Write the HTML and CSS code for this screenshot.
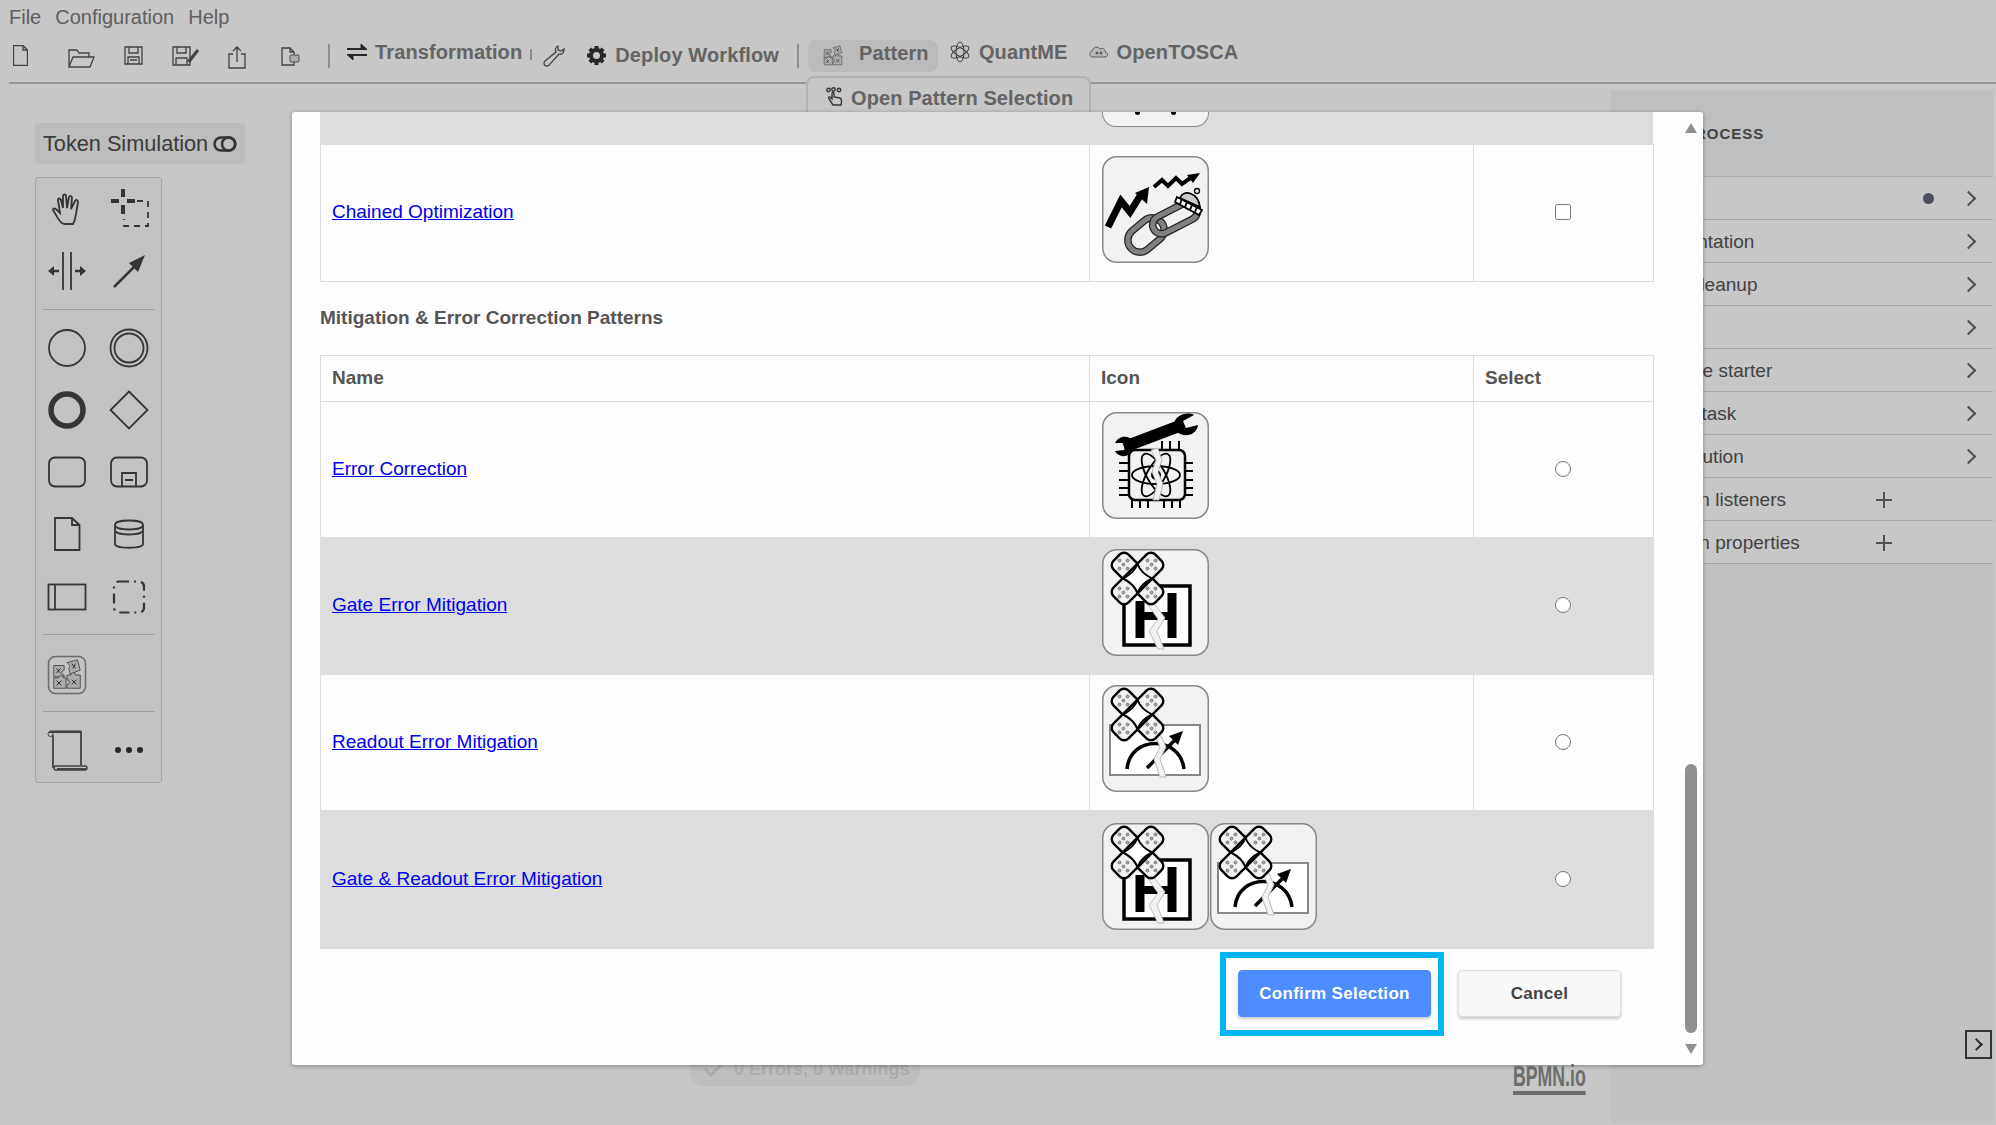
FILE: index.html
```html
<!DOCTYPE html>
<html lang="en">
<head>
    <meta charset="UTF-8">
    <title>Quantum Workflow Modeler</title>
    <link rel="stylesheet" href="styles.css">
</head>
<body>

<!-- shared drawings -->
<svg class="defs" aria-hidden="true">
    <symbol id="bandage" viewBox="0 0 107 107">
        <g stroke="#000" stroke-width="2.4" fill="#f2f2f2">
            <rect x="6" y="19" width="59" height="21" rx="6" transform="rotate(45 35.500 29.500)"/>
            <rect x="6" y="19" width="59" height="21" rx="6" transform="rotate(-45 35.500 29.500)"/>
        </g>
        <path d="M35.500 15Q39 24 50 29.500Q39 35 35.500 44Q32 35 21 29.500Q32 24 35.500 15Z" fill="#fff" stroke="#000" stroke-width="2"/>
        <g id="pad-dots" fill="#aaa" stroke="#666" stroke-width=".8">
            <circle cx="21.500" cy="15.500" r="1.500"/><circle cx="17.500" cy="11.500" r="1.500"/><circle cx="25.500" cy="11.500" r="1.500"/>
            <circle cx="17.500" cy="19.500" r="1.500"/><circle cx="25.500" cy="19.500" r="1.500"/>
        </g>
        <use href="#pad-dots" x="28"/>
        <use href="#pad-dots" y="28"/>
        <use href="#pad-dots" x="28" y="28"/>
    </symbol>
    <symbol id="gate-box" viewBox="0 0 107 107">
        <rect x="22" y="37" width="66" height="59" fill="#fff" stroke="#000" stroke-width="3.500"/>
        <path d="M38 52V89M70 44V89" stroke="#000" stroke-width="9"/>
        <path d="M40 67H68" stroke="#000" stroke-width="8"/>
        <path d="M46 56L56 70L47 82L56 100H62L55 82L63 69L52 54Z" fill="#f2f2f2" stroke="#bbb" stroke-width="1"/>
    </symbol>
    <symbol id="readout-box" viewBox="0 0 107 107">
        <rect x="8" y="40" width="90" height="50" fill="#fff" stroke="#888" stroke-width="2"/>
        <path d="M25 84C28 50 78 50 82 84" fill="none" stroke="#000" stroke-width="3.500"/>
        <path d="M45 83L76 52" stroke="#000" stroke-width="3.500"/>
        <path d="M81 46L67 51L76 60Z" fill="#000"/>
        <path d="M52 48L58 62L52 74L58 92H64L58 74L64 62L57 46Z" fill="#f2f2f2" stroke="#bbb" stroke-width="1"/>
    </symbol>
    <symbol id="puzzle" viewBox="0 0 38 38">
        <g fill="#ddd" stroke="#444" stroke-width=".8">
            <path d="M5 9H16V14a2.500 2.500 0 0 0 0 5V21H5Z"/>
            <path d="M19 6L30 3L33 14L27 16a2.500 2.500 0 0 1-5 1L21 12a2.500 2.500 0 0 0 0-4Z"/>
            <path d="M5 22H10a2.500 2.500 0 0 1 5 0H18V33H5Z"/>
            <path d="M19 22V19H23a2.500 2.500 0 0 1 5 0H33V33H19V29a2.500 2.500 0 0 0 0-5Z"/>
        </g>
        <path d="M8 12L12 17M12 12L8 17M24 7L28 12M28 7L25 12M8 25L13 30M13 25L8 30M24 24L29 29M29 24L24 29" stroke="#333" stroke-width="1"/>
    </symbol>
</svg>

<div class="app">
    <nav class="menubar">
        <span>File</span>
        <span>Configuration</span>
        <span>Help</span>
    </nav>

    <div class="toolbar">
        <div class="file-tools">
            <svg class="tool-new" width="15" height="21" viewBox="0 0 15 21"><path d="M.5.500H10L14.500 5V20.500H.5ZM10 .5V5H14.500" class="line"/></svg>
            <svg class="tool-open" width="27" height="19" viewBox="0 0 27 19"><path d="M1 18V1H9L11 4H21V8M1 18L5 8H26L22 18Z" class="line"/></svg>
            <svg class="tool-save" width="19" height="19" viewBox="0 0 19 19"><path d="M1 1H18V18H1ZM5 1V7H14V1M4 18V11H15V18M6 14H13" class="line"/></svg>
            <svg class="tool-save" width="27" height="20" viewBox="0 0 27 20"><path d="M1 1H18V19H1ZM5 1V7H14V1M4 19V12H15V19" class="line"/><path d="M15 15L25 3L27 5L18 17Z" fill="#555"/></svg>
            <svg class="tool-save" width="18" height="23" viewBox="0 0 18 23"><path d="M5 8H1V22H17V8H13M9 16V1M5 5L9 1L13 5" class="line"/></svg>
            <svg class="tool-export" width="19" height="19" viewBox="0 0 19 19"><path d="M1 1H9L13 5V18H1ZM9 1V5H13" class="line"/><rect x="9" y="8" width="9" height="7" rx="1" fill="#ddd" stroke="#666"/></svg>
        </div>
        <span class="tool-sep"></span>
        <div class="tool-btn raised tool-transform">
            <svg width="20" height="20" viewBox="0 0 20 20"><path d="M0 6.500H14V2L20 7.500H0ZM20 13.500H6V18L0 12.500H20Z" fill="#333" stroke="#333"/></svg>
            <span>Transformation</span>
        </div>
        <span class="tool-sep small"></span>
        <svg class="tool-wrench" width="23" height="22" viewBox="0 0 23 22"><path d="M16 1C13 2 13 5 14 7L3 16C1 18 2 21 5 21C7 21 8 19 8 19L17 9C20 10 22 8 22 4L19 6L16 5Z" class="line"/></svg>
        <div class="tool-btn tool-deploy">
            <svg width="21" height="21" viewBox="0 0 21 21"><circle cx="10.500" cy="10.500" r="5.500" fill="none" stroke="#333" stroke-width="4"/><path d="M10.500 1V4M10.500 17V20M1 10.500H4M17 10.500H20M3.800 3.800L6 6M15 15L17.200 17.200M3.800 17.200L6 15M15 6L17.200 3.800" stroke="#333" stroke-width="4"/></svg>
            <span>Deploy Workflow</span>
        </div>
        <span class="tool-sep deploy-sep"></span>
        <div class="tool-btn raised tool-pattern active">
            <svg width="24" height="24"><use href="#puzzle"/></svg>
            <span>Pattern</span>
        </div>
        <div class="tool-btn raised tool-quant">
            <svg width="20" height="22" viewBox="0 0 20 22" fill="none" stroke="#555"><ellipse cx="10" cy="11" rx="4" ry="10"/><ellipse cx="10" cy="11" rx="4" ry="10" transform="rotate(60 10 11)"/><ellipse cx="10" cy="11" rx="4" ry="10" transform="rotate(-60 10 11)"/></svg>
            <span>QuantME</span>
        </div>
        <div class="tool-btn raised tool-tosca">
            <svg width="20" height="12" viewBox="0 0 20 12"><path d="M4 11C0 11 0 6 3 5C4 1 9 0 11 3C15 1 17 5 16 6C20 7 19 11 16 11Z" fill="#eee" stroke="#777"/><circle cx="8" cy="7" r="1.500" fill="#777"/><circle cx="12" cy="7" r="1.500" fill="#777"/></svg>
            <span>OpenTOSCA</span>
        </div>
    </div>

    <div class="pattern-menu">
        <svg width="18" height="19" viewBox="0 0 18 19" fill="none" stroke="#444" stroke-width="1.400"><path d="M7 18L3 12C2 10 4 9 5 11L6 12V7C6 5 8 5 8 7V10L14 11C16 12 16 14 15 18Z"/><circle cx="2.500" cy="3" r="1.700"/><circle cx="7.500" cy="2.500" r="1.700"/><circle cx="13" cy="3" r="1.700"/></svg>
        <span>Open Pattern Selection</span>
    </div>

    <main class="workspace">
        <aside class="left-col">
            <div class="token-sim">
                <span>Token Simulation</span>
                <svg width="24" height="16" viewBox="0 0 24 16" fill="none" stroke="#444" stroke-width="2.500"><rect x="1.500" y="1.500" width="21" height="13" rx="6.500"/><circle cx="15.500" cy="8" r="6.500"/></svg>
            </div>

            <div class="palette">
                <div class="palette-group first">
                    <svg class="pi" viewBox="0 0 44 44"><path d="M19 38C15 37 14 34 11 29L8 24C8 22 10 22 12 24L15 27L13 14C13 12 15 12 16 14L18 22L18 10C18 8 21 8 21 10L22 22L24 11C25 9 27 10 27 12L26 23L30 15C31 13 33 14 33 16L31 28C30 32 30 35 28 38Z" class="ic"/></svg>
                    <svg class="pi" viewBox="0 0 44 44"><path d="M16 3V11M16 19V28M4 15H12M20 15H28" stroke="#444" stroke-width="4" fill="none"/><path d="M30 15H41V40H17V33" class="ic dashed"/></svg>
                    <svg class="pi" viewBox="0 0 44 44"><path d="M18 3V41M26 3V41" class="ic"/><path d="M3 22L9 17V27ZM41 22L35 17V27Z" fill="#444"/><path d="M8 22H14M30 22H36" stroke="#444" stroke-width="2.500"/></svg>
                    <svg class="pi" viewBox="0 0 44 44"><path d="M7 38L30 15" stroke="#444" stroke-width="2.500"/><path d="M38 6L22 14L31 23Z" fill="#444"/></svg>
                </div>
                <hr class="palette-sep">
                <div class="palette-group">
                    <svg class="pi" viewBox="0 0 44 44"><circle cx="22" cy="22" r="18" class="ic"/></svg>
                    <svg class="pi" viewBox="0 0 44 44"><circle cx="22" cy="22" r="18.500" class="ic"/><circle cx="22" cy="22" r="14.500" class="ic"/></svg>
                    <svg class="pi" viewBox="0 0 44 44"><circle cx="22" cy="22" r="16" fill="none" stroke="#444" stroke-width="5.500"/></svg>
                    <svg class="pi" viewBox="0 0 44 44"><path d="M22 3.500L40.500 22L22 40.500L3.500 22Z" class="ic"/></svg>
                    <svg class="pi" viewBox="0 0 44 44"><rect x="4" y="7.500" width="36" height="29" rx="6" class="ic"/></svg>
                    <svg class="pi" viewBox="0 0 44 44"><rect x="4" y="7.500" width="36" height="29" rx="6" class="ic"/><path d="M15 36V23H29V36M18 30H26" class="ic"/></svg>
                    <svg class="pi" viewBox="0 0 44 44"><path d="M10 6H27L34.500 13V38H10ZM27 6V13H34.500" class="ic"/></svg>
                    <svg class="pi" viewBox="0 0 44 44"><path d="M8 13V32C8 37 36 37 36 32V13C36 7 8 7 8 13C8 19 36 19 36 13M8 18C8 24 36 24 36 18" class="ic"/></svg>
                    <svg class="pi" viewBox="0 0 44 44"><rect x="3.500" y="10.500" width="37" height="25" class="ic"/><path d="M10 10.500V35.500" class="ic"/></svg>
                    <svg class="pi" viewBox="0 0 44 44"><rect x="7" y="7.500" width="30" height="31" rx="5" class="ic dashdot"/></svg>
                </div>
                <hr class="palette-sep">
                <div class="palette-group">
                    <svg class="pi pi-pattern" viewBox="0 0 44 44"><rect x="3.500" y="3.500" width="37" height="37" rx="7" fill="none" stroke="#888" stroke-width="1.500"/><use href="#puzzle" x="4" y="4" width="36" height="36"/></svg>
                </div>
                <hr class="palette-sep">
                <div class="palette-group">
                    <svg class="pi pi-script" viewBox="0 0 44 44"><path d="M4 3H36V36M8 6V39M12 40H41" fill="none" stroke="#555" stroke-width="1.800"/><path d="M5 2H36" stroke="#555"/><circle cx="5.500" cy="5" r="2.500" fill="none" stroke="#555"/><rect x="9" y="37" width="33" height="4" rx="2" fill="none" stroke="#555" stroke-width="1.500"/></svg>
                    <div class="dots"><i></i><i></i><i></i></div>
                </div>
            </div>
        </aside>

        <div class="canvas">
            <div class="status-pill">
                <svg width="20" height="14" viewBox="0 0 20 14" fill="none" stroke="#ddd" stroke-width="3.500"><path d="M2 6L8 12L18 2"/></svg>
                <span>0 Errors, 0 Warnings</span>
            </div>
            <div class="bpmn-logo">BPMN.io</div>
        </div>

        <aside class="props">
            <div class="props-head"><span>PROCESS</span></div>
            <div class="props-row"><span class="lbl">General</span><i class="dot"></i><span class="chev"></span></div>
            <div class="props-row"><span class="lbl">Documentation</span><span class="chev"></span></div>
            <div class="props-row"><span class="lbl">History cleanup</span><span class="chev"></span></div>
            <div class="props-row"><span class="lbl">Tasklist</span><span class="chev"></span></div>
            <div class="props-row"><span class="lbl">Candidate starter</span><span class="chev"></span></div>
            <div class="props-row"><span class="lbl">External task</span><span class="chev"></span></div>
            <div class="props-row"><span class="lbl">Job execution</span><span class="chev"></span></div>
            <div class="props-row"><span class="lbl">Execution listeners</span><span class="plus"></span></div>
            <div class="props-row"><span class="lbl">Extension properties</span><span class="plus"></span></div>
            <div class="props-toggle"><span class="chev"></span></div>
        </aside>
    </main>
</div>

<div class="overlay"></div>

<div class="modal">
    <div class="tail-row">
        <div class="tail-tile"><i></i><i></i></div>
    </div>

    <table class="pattern-table">
        <tr>
            <td class="col-name"><a href="#">Chained Optimization</a></td>
            <td class="col-icon">
                <div class="tiles">
                    <svg class="tile" viewBox="0 0 107 107">
                        <rect x=".75" y=".75" width="105.500" height="105.500" rx="14" class="tile-bg"/>
                        <path d="M6 71L19 45L28 56L38 40" fill="none" stroke="#000" stroke-width="7"/>
                        <path d="M47 31L33 37L45 48Z" fill="#000"/>
                        <path d="M52 31L60 24L66 30L74 22L80 28L90 21" fill="none" stroke="#000" stroke-width="4"/>
                        <path d="M98 17L85 19L91 27Z" fill="#000"/>
                        <g fill="none">
                            <rect x="24" y="67" width="40" height="24" rx="12" stroke="#222" stroke-width="7.500" transform="rotate(-40 44 79)"/>
                            <rect x="24" y="67" width="40" height="24" rx="12" stroke="#808080" stroke-width="5" transform="rotate(-40 44 79)"/>
                            <rect x="49" y="53" width="48" height="18" rx="9" stroke="#222" stroke-width="7.500" transform="rotate(-27 73 62)"/>
                            <rect x="49" y="53" width="48" height="18" rx="9" stroke="#808080" stroke-width="5" transform="rotate(-27 73 62)"/>
                        </g>
                        <path d="M78 42C81 33 96 36 98 51Z" fill="#ccc" stroke="#000" stroke-width="1.800"/>
                        <path d="M75 41L100 54L97 59L73 46Z" fill="#fff" stroke="#000" stroke-width="1.800"/>
                        <path d="M80 43L78 48M85 46L83 51M90 49L88 54M95 51L93 56" stroke="#000" stroke-width="2"/>
                        <circle cx="95" cy="35" r="2.500" fill="#fff" stroke="#000" stroke-width="1.300"/>
                    </svg>
                </div>
            </td>
            <td class="col-select"><input type="checkbox"></td>
        </tr>
    </table>

    <h3 class="section-title">Mitigation &amp; Error Correction Patterns</h3>

    <table class="pattern-table">
        <tr class="head-row">
            <th class="col-name">Name</th>
            <th class="col-icon">Icon</th>
            <th class="col-select">Select</th>
        </tr>
        <tr>
            <td class="col-name"><a href="#">Error Correction</a></td>
            <td class="col-icon">
                <div class="tiles">
                    <svg class="tile" viewBox="0 0 107 107">
                        <rect x=".75" y=".75" width="105.500" height="105.500" rx="14" class="tile-bg"/>
                        <rect x="27" y="38" width="56" height="50" rx="6" fill="none" stroke="#000" stroke-width="2.500"/>
                        <path d="M17 51H27M17 59H27M17 68H27M17 76H27M17 83H27M83 51H91M83 59H91M83 68H91M83 76H91M83 83H91M30 88V96M38 88V96M46 88V96M62 88V96M70 88V96M78 88V96M60 29V38M68 29V38M77 29V38" stroke="#000" stroke-width="2"/>
                        <g fill="none" stroke="#000" stroke-width="1.800">
                            <ellipse cx="54" cy="63" rx="24" ry="9"/>
                            <ellipse cx="54" cy="63" rx="24" ry="9" transform="rotate(60 54 63)"/>
                            <ellipse cx="54" cy="63" rx="24" ry="9" transform="rotate(-60 54 63)"/>
                        </g>
                        <circle cx="54" cy="63" r="5" fill="#000"/>
                        <path d="M49 38L54 48L50 60L55 72L51 88H57L61 72L56 60L60 48L56 36Z" fill="#f2f2f2" stroke="#aaa" stroke-width=".8"/>
                        <path d="M22 35L80 13" stroke="#000" stroke-width="12"/>
                        <path d="M72 11C75 1 88 0 92 3L81 9L84 16L96 13C95 22 84 27 75 20Z" fill="#000"/>
                        <path d="M30 38C28 46 16 46 13 39L22 38L25 31L13 31C16 24 26 22 31 29Z" fill="#000"/>
                    </svg>
                </div>
            </td>
            <td class="col-select"><input type="radio" name="mitigation"></td>
        </tr>
        <tr>
            <td class="col-name"><a href="#">Gate Error Mitigation</a></td>
            <td class="col-icon">
                <div class="tiles">
                    <svg class="tile" viewBox="0 0 107 107">
                        <rect x=".75" y=".75" width="105.500" height="105.500" rx="14" class="tile-bg"/>
                        <use href="#gate-box" width="107" height="107"/>
                        <use href="#bandage" width="107" height="107"/>
                    </svg>
                </div>
            </td>
            <td class="col-select"><input type="radio" name="mitigation"></td>
        </tr>
        <tr>
            <td class="col-name"><a href="#">Readout Error Mitigation</a></td>
            <td class="col-icon">
                <div class="tiles">
                    <svg class="tile" viewBox="0 0 107 107">
                        <rect x=".75" y=".75" width="105.500" height="105.500" rx="14" class="tile-bg"/>
                        <use href="#readout-box" width="107" height="107"/>
                        <use href="#bandage" width="107" height="107"/>
                    </svg>
                </div>
            </td>
            <td class="col-select"><input type="radio" name="mitigation"></td>
        </tr>
        <tr class="last-row">
            <td class="col-name"><a href="#">Gate &amp; Readout Error Mitigation</a></td>
            <td class="col-icon">
                <div class="tiles">
                    <svg class="tile" viewBox="0 0 107 107">
                        <rect x=".75" y=".75" width="105.500" height="105.500" rx="14" class="tile-bg"/>
                        <use href="#gate-box" width="107" height="107"/>
                        <use href="#bandage" width="107" height="107"/>
                    </svg>
                    <svg class="tile" viewBox="0 0 107 107">
                        <rect x=".75" y=".75" width="105.500" height="105.500" rx="14" class="tile-bg"/>
                        <use href="#readout-box" width="107" height="107"/>
                        <use href="#bandage" width="107" height="107"/>
                    </svg>
                </div>
            </td>
            <td class="col-select"><input type="radio" name="mitigation"></td>
        </tr>
    </table>

    <div class="modal-footer">
        <div class="highlight"><button class="btn btn-primary" type="button">Confirm Selection</button></div>
        <button class="btn btn-cancel" type="button">Cancel</button>
    </div>

    <div class="scrollbar">
        <span class="arrow-up"></span>
        <span class="thumb"></span>
        <span class="arrow-down"></span>
    </div>
</div>

</body>
</html>
```
FILE: styles.css
```css
* {
    box-sizing: border-box;
}

html, body {
    margin: 0;
    height: 1125px;
    overflow: hidden;
}

body {
    position: relative;
    font-family: "Liberation Sans", Arial, sans-serif;
    background: #fff;
    color: #444;
}

.defs {
    position: absolute;
    width: 0;
    height: 0;
}

.line {
    fill: none;
    stroke: #555;
    stroke-width: 1.3;
}

.app {
    display: flex;
    flex-direction: column;
    height: 1125px;
}

/* menu and toolbar */
.menubar {
    display: flex;
    gap: 14px;
    height: 32px;
    padding: 6px 0 0 9px;
    font-size: 20px;
    line-height: 23px;
    color: #7a7a7a;
}

.toolbar {
    display: flex;
    align-items: flex-start;
    height: 52px;
    margin-left: 9px;
    border-bottom: 2px solid #c4c4c4;
    font-size: 20px;
    font-weight: bold;
    letter-spacing: .12px;
    color: #808080;
}

.file-tools {
    display: flex;
    align-items: flex-start;
    gap: 29px;
    padding: 13px 0 0 4px;
}

.tool-open { margin-top: 4px; margin-left: 11px; }
.tool-save { margin-top: 1px; }
.tool-export { margin-top: 2px; margin-left: 6px; }

.tool-sep {
    width: 2px;
    height: 24px;
    margin: 12px 0 0 28px;
    background: #b5b5b5;
}

.tool-sep.small {
    height: 11px;
    margin: 17px 0 0 8px;
}

.tool-sep.deploy-sep {
    margin: 12px 0 0 18px;
}

.tool-btn {
    display: flex;
    align-items: center;
    padding-top: 10px;
    line-height: 26px;
}

.tool-btn.raised {
    padding-top: 7px;
}

.tool-transform { margin-left: 17px; gap: 8px; }
.tool-wrench { margin: 13px 0 0 10px; }
.tool-deploy { margin-left: 21px; gap: 8px; }

.tool-pattern {
    width: 130px;
    height: 32px;
    margin: 8px 0 0 9px;
    padding: 0 0 0 13px !important;
    gap: 14px;
    border-radius: 8px;
}

.tool-pattern span {
    margin-top: -6px;
}

.tool-pattern.active {
    background: #f0f0f0;
}

.tool-quant { margin-left: 12px; gap: 9px; }
.tool-tosca { margin-left: 21px; gap: 8px; }

.pattern-menu {
    position: absolute;
    left: 806px;
    top: 76px;
    width: 285px;
    height: 42px;
    display: flex;
    align-items: flex-start;
    gap: 7px;
    padding: 9px 0 0 18px;
    border: 2px solid #e4e4e4;
    border-radius: 8px 8px 0 0;
    background: #fff;
    font-size: 20px;
    font-weight: bold;
    line-height: 22px;
    letter-spacing: .1px;
    color: #808080;
}

/* main area */
.workspace {
    display: flex;
    flex: 1;
    min-height: 0;
}

.left-col {
    width: 245px;
    padding: 39px 0 0 35px;
}

.token-sim {
    display: flex;
    align-items: center;
    gap: 5px;
    width: 210px;
    height: 41px;
    padding-left: 8px;
    border-radius: 3px;
    background: #f2f2f2;
    font-size: 21.700px;
    color: #4c4c4c;
}

.palette {
    width: 127px;
    margin-top: 13px;
    padding-bottom: 1px;
    border: 1px solid #d2d2d2;
    border-radius: 3px;
    background: #fafafa;
}

.palette-group {
    display: grid;
    grid-template-columns: 62px 62px;
    grid-auto-rows: 62px;
    justify-items: center;
    align-items: center;
}

.palette-group.first {
    grid-auto-rows: 63px;
    margin-top: -2px;
}

.palette-sep {
    width: 112px;
    height: 1px;
    margin: 7px 0 7px 7px;
    border: 0;
    background: #ccc;
}

.pi {
    width: 44px;
    height: 44px;
}

.pi-pattern {
    margin-top: 3px;
}

.pi-script {
    margin-top: 1px;
}

.ic {
    fill: none;
    stroke: #444;
    stroke-width: 1.800;
}

.ic.dashed {
    stroke-dasharray: 6 5;
}

.ic.dashdot {
    stroke-width: 2.200;
    stroke-dasharray: 10 5 2 5;
}

.dots {
    display: flex;
    gap: 5px;
}

.dots i {
    width: 6px;
    height: 6px;
    border-radius: 50%;
    background: #333;
}

.canvas {
    position: relative;
    flex: 1;
}

.status-pill {
    position: absolute;
    left: 445px;
    top: 950px;
    display: flex;
    align-items: flex-end;
    gap: 11px;
    width: 230px;
    height: 52px;
    padding: 0 0 6px 13px;
    border-radius: 0 0 14px 14px;
    background: #f4f4f4;
    font-size: 18px;
    font-weight: bold;
    white-space: nowrap;
    color: #dcdcdc;
}

.status-pill svg {
    margin-bottom: 3px;
}

.bpmn-logo {
    position: absolute;
    z-index: 1;
    left: 1268px;
    top: 977px;
    border-bottom: 4px solid #6d6d6d;
    font-size: 30px;
    font-weight: bold;
    line-height: 30px;
    color: #6d6d6d;
    transform: scaleX(.59);
    transform-origin: left top;
}

/* properties panel */
.props {
    position: relative;
    width: 382px;
    height: 1033px;
    margin: 6px 3px 0 0;
    background: #f9f9f9;
    font-size: 19px;
    color: #555;
}

.props-head {
    display: flex;
    align-items: center;
    height: 87px;
    padding: 0 0 0 73px;
    border-bottom: 1px solid #dcdcdc;
    background: #f4f5f6;
    font-size: 15px;
    font-weight: bold;
    letter-spacing: 1px;
}

.props-row {
    display: flex;
    align-items: center;
    height: 43px;
    padding: 1px 16px 0 15.500px;
    border-bottom: 1px solid #d8d8d8;
    background: #fff;
}

.lbl {
    flex: 1;
}

.dot {
    width: 11px;
    height: 11px;
    margin-right: 29px;
    border-radius: 50%;
    background: #61677a;
}

.chev {
    width: 11px;
    height: 11px;
    margin-right: 3px;
    border-top: 2px solid #666;
    border-right: 2px solid #666;
    transform: rotate(45deg);
}

.plus {
    position: relative;
    width: 16px;
    height: 16px;
    margin-right: 85px;
    background:
        linear-gradient(#666, #666) center / 16px 2px no-repeat,
        linear-gradient(#666, #666) center / 2px 16px no-repeat;
}

.props-toggle {
    position: absolute;
    right: 1px;
    top: 940px;
    display: flex;
    align-items: center;
    justify-content: center;
    width: 27px;
    height: 29px;
    border: 2px solid #444;
    background: #f9f9f9;
}

.props-toggle .chev {
    width: 9px;
    height: 9px;
    margin-right: 4px;
    border-color: #333;
}

/* modal */
.overlay {
    position: absolute;
    inset: 0;
    background: rgba(0, 0, 0, .22);
}

.modal {
    position: absolute;
    left: 292px;
    top: 112px;
    width: 1411px;
    height: 953px;
    padding: 0 50px 0 28px;
    border-radius: 3px;
    background: #fdfdfd;
    box-shadow: 0 1px 4px rgba(0, 0, 0, .35);
}

.tail-row {
    height: 32px;
    padding-left: 782px;
    background: #ddd;
}

.tail-tile {
    display: flex;
    justify-content: space-around;
    width: 107px;
    height: 15px;
    padding: 0 16px;
    border: 1.500px solid #888;
    border-top: 0;
    border-radius: 0 0 14px 14px;
    background: #f2f2f2;
}

.tail-tile i {
    width: 5px;
    height: 3px;
    border-radius: 0 0 3px 3px;
    background: #000;
}

.pattern-table {
    width: 1333px;
    border-collapse: collapse;
    table-layout: fixed;
    font-size: 19px;
}

.pattern-table td,
.pattern-table th {
    padding: 11px;
    border: 1px solid #ddd;
    text-align: left;
}

.pattern-table tr:nth-child(odd):not(.head-row):not(:only-child) {
    background: #ddd;
}

.pattern-table th {
    height: 46px;
    padding: 0 11px 1px;
    color: #555;
}

.col-name { width: 769px; }
.col-icon { width: 384px; }
.col-select { width: 180px; }

.pattern-table td.col-name {
    padding-bottom: 12px;
}

.pattern-table td.col-icon {
    height: 136.500px;
    padding: 10px 11px 17px 12px;
}

.pattern-table .last-row td.col-icon {
    height: 138px;
}

.pattern-table td.col-select {
    padding: 11px 13px 12px 11px;
    text-align: center;
    line-height: 0;
}

.pattern-table input {
    width: 16px;
    height: 16px;
    margin: 0;
}

.pattern-table a {
    color: #00e;
}

.tiles {
    display: flex;
    gap: 1px;
}

.tile {
    width: 107px;
    height: 107px;
}

.tile-bg {
    fill: #f2f2f2;
    stroke: #888;
    stroke-width: 1.500;
}

.section-title {
    height: 73px;
    margin: 0;
    padding-top: 25px;
    font-size: 19px;
    line-height: 22px;
    color: #555;
}

.modal-footer {
    display: flex;
    align-items: center;
    justify-content: flex-end;
    gap: 14px;
    padding: 3px 32px 0 0;
}

.highlight {
    padding: 12px 7px 13px 12px;
    border: 6px solid #00b4f0;
}

.btn {
    display: block;
    height: 47px;
    padding: 0;
    border: 1px solid #ddd;
    border-radius: 4px;
    font-family: inherit;
    font-size: 17px;
    font-weight: bold;
    letter-spacing: .3px;
    box-shadow: 0 2px 3px rgba(0, 0, 0, .2);
}

.btn-primary {
    width: 193px;
    border-color: #4d8dff;
    background: #4d8dff;
    color: #fff;
}

.btn-cancel {
    width: 163px;
    margin-top: -1px;
    background: #f8f8f8;
    color: #444;
}

/* scrollbar drawn over the modal edge */
.scrollbar {
    position: absolute;
    left: 1393px;
    top: 0;
    bottom: 0;
    width: 13px;
}

.arrow-up,
.arrow-down {
    position: absolute;
    left: 0;
    width: 0;
    height: 0;
    border-left: 6.500px solid transparent;
    border-right: 6.500px solid transparent;
}

.arrow-up {
    top: 11px;
    border-bottom: 10px solid #8f8f8f;
}

.arrow-down {
    top: 932px;
    border-top: 10px solid #8f8f8f;
}

.thumb {
    position: absolute;
    left: 0;
    top: 652px;
    width: 12px;
    height: 269px;
    border-radius: 6px;
    background: #8f8f8f;
}
```
